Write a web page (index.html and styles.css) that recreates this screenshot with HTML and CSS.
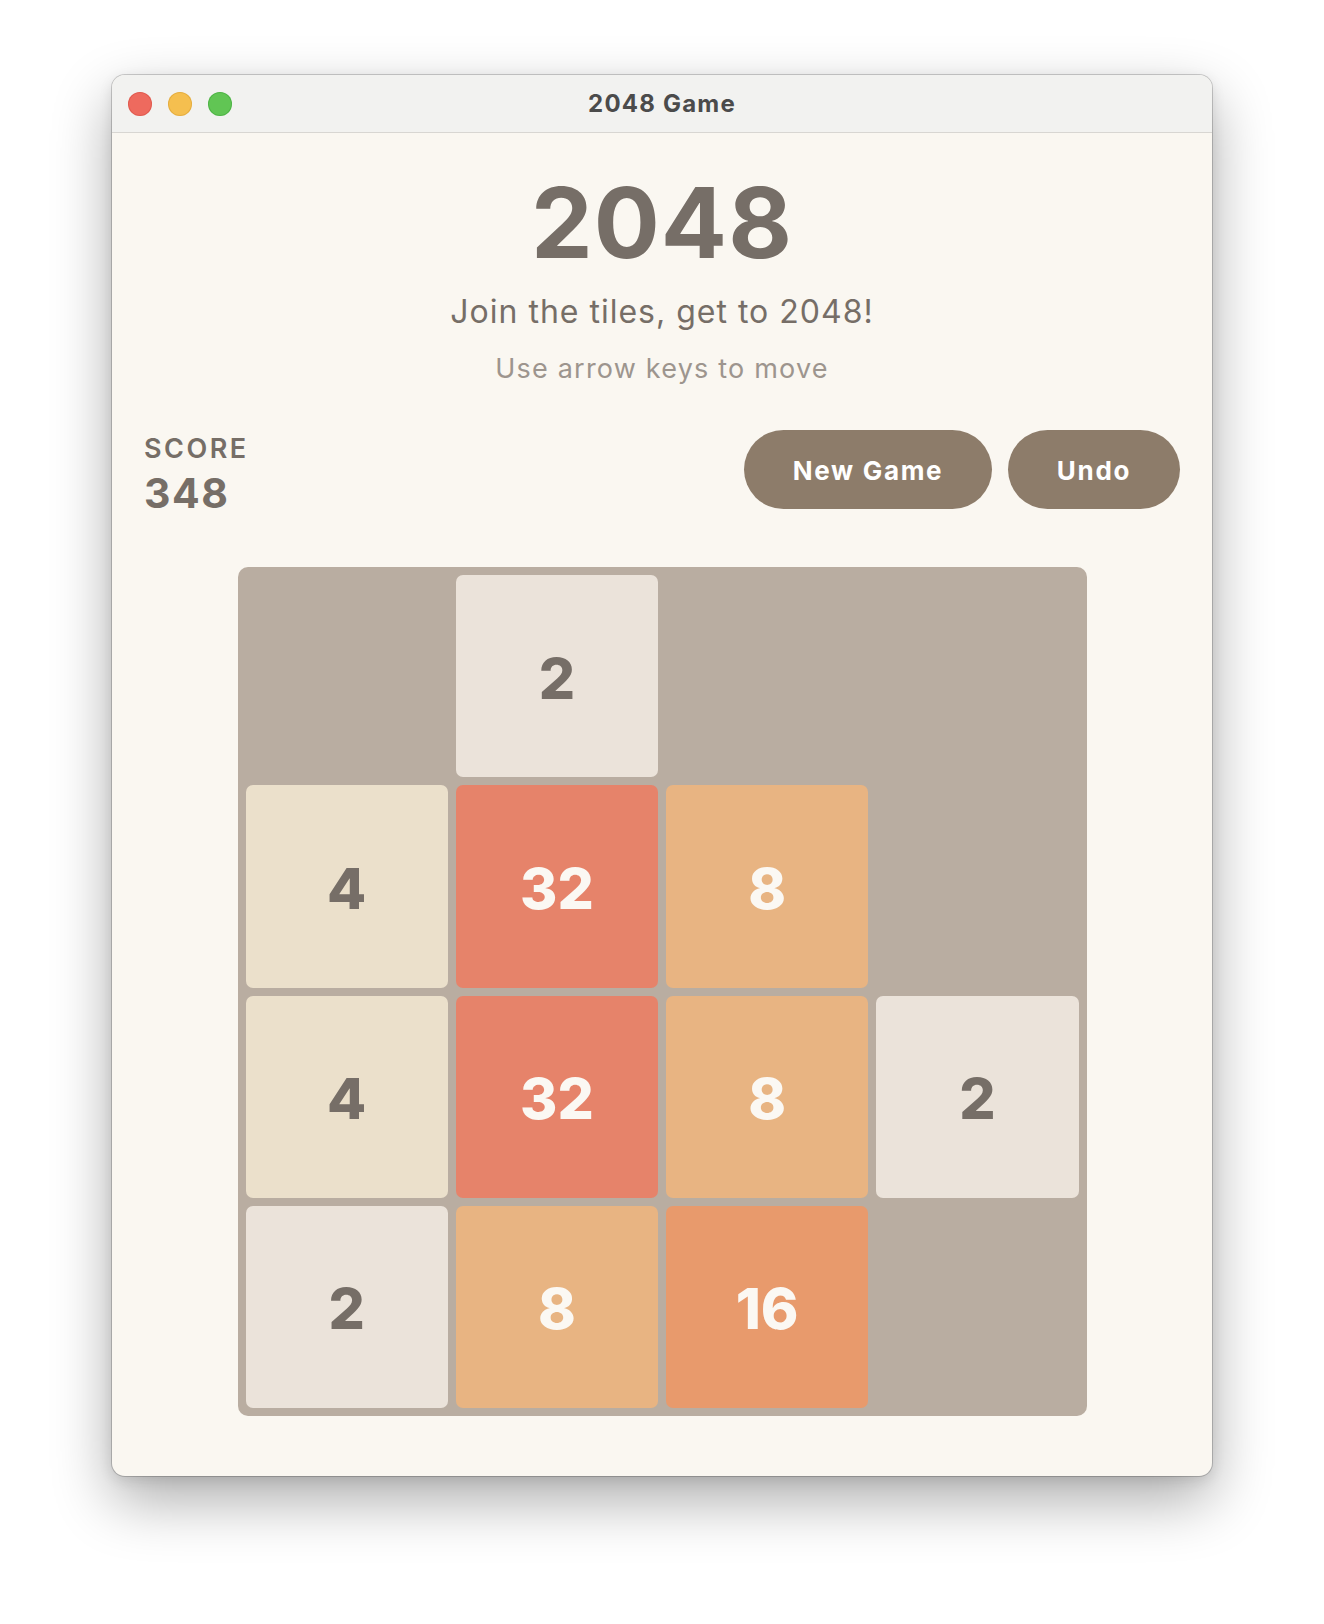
FILE: index.html
```html
<!DOCTYPE html>
<html lang="en">
<head>
<meta charset="utf-8">
<title>2048 Game</title>
<link rel="stylesheet" href="styles.css">
</head>
<body>
<div class="window">
  <div class="titlebar">
    <div class="lights">
      <span class="light red"></span>
      <span class="light yellow"></span>
      <span class="light green"></span>
    </div>
    <div class="wtitle">2048 Game</div>
  </div>
  <div class="content">
    <h1 class="heading">2048</h1>
    <p class="subtitle">Join the tiles, get to 2048!</p>
    <p class="hint">Use arrow keys to move</p>
    <div class="toprow">
      <div class="score">
        <div class="score-label">SCORE</div>
        <div class="score-value">348</div>
      </div>
      <div class="buttons">
        <button class="btn btn-new">New Game</button>
        <button class="btn btn-undo">Undo</button>
      </div>
    </div>
    <div class="board">
      <div class="cell"></div>
      <div class="cell t2">2</div>
      <div class="cell"></div>
      <div class="cell"></div>

      <div class="cell t4">4</div>
      <div class="cell t32">32</div>
      <div class="cell t8">8</div>
      <div class="cell"></div>

      <div class="cell t4">4</div>
      <div class="cell t32">32</div>
      <div class="cell t8">8</div>
      <div class="cell t2">2</div>

      <div class="cell t2">2</div>
      <div class="cell t8">8</div>
      <div class="cell t16">16</div>
      <div class="cell"></div>
    </div>
  </div>
</div>
</body>
</html>
```

FILE: styles.css
```css
* { box-sizing: border-box; }
html, body { margin: 0; padding: 0; }
body {
  background: #ffffff;
  padding: 75px 0 0 112px;
  font-family: Inter, "Noto Sans", "Liberation Sans", sans-serif;
  width: 1324px;
  height: 1624px;
  overflow: hidden;
}
.window {
  width: 1100px;
  height: 1401px;
  border-radius: 13px;
  background: #faf7f1;
  overflow: hidden;
  box-shadow: 0 0 0 1px rgba(0,0,0,0.18), 0 24px 60px rgba(0,0,0,0.33), 0 4px 14px rgba(0,0,0,0.10);
  display: flex;
  flex-direction: column;
}
.titlebar {
  height: 58px;
  flex: 0 0 58px;
  background: #f2f2f0;
  border-bottom: 1px solid #d8d6d2;
  display: flex;
  align-items: center;
  justify-content: center;
  position: relative;
}
.lights {
  position: absolute;
  left: 16px;
  top: 17px;
  display: flex;
  gap: 16px;
}
.light {
  width: 24px;
  height: 24px;
  border-radius: 50%;
  display: block;
}
.red { background: #ee6a5e; box-shadow: inset 0 0 0 1px rgba(200,60,50,0.35); }
.yellow { background: #f5bf4f; box-shadow: inset 0 0 0 1px rgba(200,140,30,0.35); }
.green { background: #61c554; box-shadow: inset 0 0 0 1px rgba(40,150,40,0.35); }
.wtitle {
  font-size: 24px;
  font-weight: 700;
  color: #4b4b4b;
  line-height: 28px;
  letter-spacing: 1.2px;
}
.content {
  flex: 1;
  padding: 41px 32px 0 32px;
  display: flex;
  flex-direction: column;
  align-items: center;
}
.heading {
  margin: 0;
  font-size: 98px;
  line-height: 98px;
  font-weight: 700;
  color: #766e67;
  letter-spacing: 1px;
}
.subtitle {
  margin: 22px 0 0 0;
  font-size: 32px;
  line-height: 36px;
  color: #766e67;
  letter-spacing: 1px;
}
.hint {
  margin: 23px 0 0 0;
  font-size: 27px;
  line-height: 32px;
  color: #9d958e;
  letter-spacing: 1.2px;
}
.toprow {
  margin-top: 45px;
  align-self: stretch;
  display: flex;
  justify-content: space-between;
  align-items: flex-start;
}
.score { padding-top: 3px; }
.score-label {
  font-size: 27px;
  line-height: 32px;
  font-weight: 600;
  color: #766e67;
  letter-spacing: 2.5px;
}
.score-value {
  margin-top: 4px;
  font-size: 41px;
  line-height: 48px;
  font-weight: 700;
  color: #766e67;
  letter-spacing: 1.5px;
}
.buttons {
  display: flex;
  gap: 16px;
}
.btn {
  height: 79px;
  border: none;
  border-radius: 40px;
  background: #8d7c6a;
  color: #ffffff;
  font-family: inherit;
  font-size: 26px;
  font-weight: 700;
  padding: 2px 0 0 0;
  letter-spacing: 1.7px;
}
.btn-new { width: 248px; }
.btn-undo { width: 172px; }
.board {
  margin-top: 50px;
  width: 849px;
  height: 849px;
  background: #b9ada1;
  border-radius: 10px;
  padding: 8px;
  display: grid;
  grid-template-columns: repeat(4, 1fr);
  grid-template-rows: repeat(4, 1fr);
  gap: 8px;
}
.cell {
  border-radius: 7px;
  display: flex;
  align-items: center;
  justify-content: center;
  padding-top: 4px;
  font-size: 57px;
  font-weight: 800;
  color: #766e67;
}
.t2 { background: #ebe3da; }
.t4 { background: #ebe0cb; }
.t8 { background: #e8b482; color: #fbf8f3; }
.t16 { background: #e89a6c; color: #fbf8f3; }
.t32 { background: #e6836a; color: #fbf8f3; }
```
